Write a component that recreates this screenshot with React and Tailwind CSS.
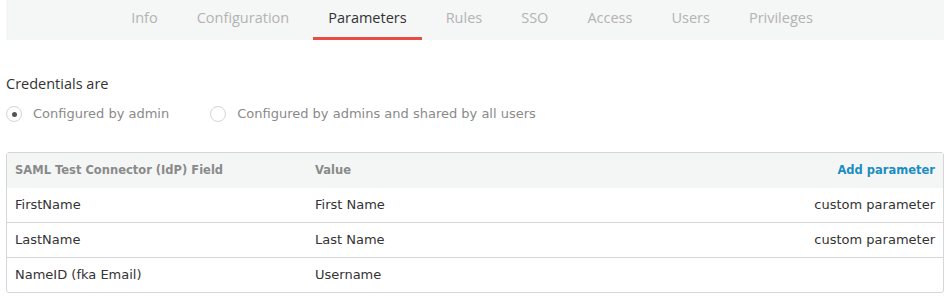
const tabs = ['Info', 'Configuration', 'Parameters', 'Rules', 'SSO', 'Access', 'Users', 'Privileges']

const rows = [
  { field: 'FirstName', value: 'First Name', note: 'custom parameter' },
  { field: 'LastName', value: 'Last Name', note: 'custom parameter' },
  { field: 'NameID (fka Email)', value: 'Username', note: '' },
]

const Radio = ({ checked, label }) => (
  <label className="flex items-center gap-[11px]">
    <span className="w-4 h-4 rounded-full border border-[#d4d4d4] bg-white flex items-center justify-center">
      {checked && <span className="w-[5px] h-[5px] rounded-full bg-[#555]" />}
    </span>
    <span className="text-[#8a8a8a]">{label}</span>
  </label>
)

export default function App() {
  return (
    <div className="w-[950px] h-[296px] bg-white overflow-hidden text-[13px]" style={{ fontFamily: '"DejaVu Sans", sans-serif' }}>
      <div className="mx-[6px] h-10 bg-[#f5f6f6] flex justify-center pr-[6px]"
        style={{ fontFamily: '"Open Sans", sans-serif' }}>
        <div className="flex gap-[9px] text-[14.5px]">
          {tabs.map(t => (
            <div key={t}
              className={"px-[15px] flex items-center pb-[2px] border-b-[3px] " + (t === 'Parameters' ? 'border-[#ea4b42] text-[#333]' : 'border-transparent text-[#b3b3b3]')}>
              {t}
            </div>
          ))}
        </div>
      </div>

      <div className="px-[6px]">
        <p className="mt-[35px] text-[14.5px] text-[#333] leading-[18px]" style={{ fontFamily: '"Open Sans", sans-serif' }}>Credentials are</p>
        <div className="flex gap-[41px] mt-[11px] h-[20px]">
          <Radio checked label="Configured by admin" />
          <Radio label="Configured by admins and shared by all users" />
        </div>

        <div className="mt-[28px] border border-[#d6d6d6] rounded-[3px] text-[#333]">
          <div className="flex items-center h-[35px] bg-[#f4f6f6] px-[8px] font-bold text-[11.5px] text-[#8a8a8a]">
            <span className="w-[300px]">SAML Test Connector (IdP) Field</span>
            <span className="flex-1">Value</span>
            <span className="text-[#1c8dc1]">Add parameter</span>
          </div>
          {rows.map((r, i) => (
            <div key={r.field} className={"flex items-center h-[34px] px-[8px] " + (i < rows.length - 1 ? 'border-b border-[#d6d6d6] box-content' : '')}>
              <span className="w-[300px]">{r.field}</span>
              <span className="flex-1">{r.value}</span>
              <span>{r.note}</span>
            </div>
          ))}
        </div>
      </div>
    </div>
  )
}
